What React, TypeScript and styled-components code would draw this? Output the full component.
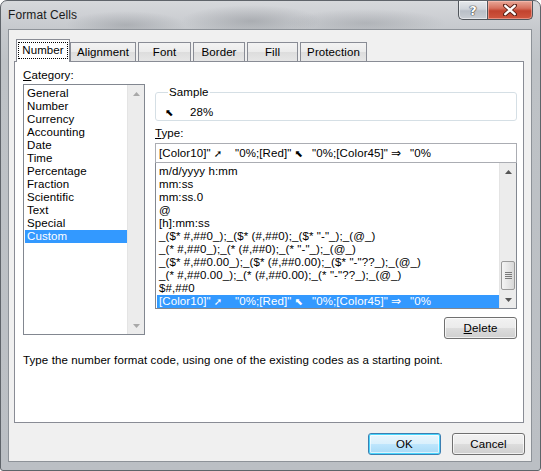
import React from "react";
import styled, { createGlobalStyle, css } from "styled-components";

const UI = `"Liberation Sans", "DejaVu Sans", sans-serif`;

const Global = createGlobalStyle`
  html, body { margin: 0; padding: 0; background: #ffffff; }
  body {
    width: 541px; height: 471px; overflow: hidden;
    font-family: ${UI};
    font-size: 11.5px; color: #000;
  }
  * { box-sizing: border-box; }
`;

const Window = styled.div`
  width: 541px;
  height: 471px;
  display: flex;
  flex-direction: column;
  border: 1px solid #5f646a;
  border-radius: 7px 7px 3px 3px;
  overflow: hidden;
  background:
    radial-gradient(ellipse 60px 14px at 125px 24px, rgba(120,124,130,0.35), transparent),
    radial-gradient(ellipse 70px 16px at 250px 20px, rgba(110,114,120,0.35), transparent),
    radial-gradient(ellipse 80px 14px at 365px 22px, rgba(120,124,130,0.3), transparent),
    linear-gradient(180deg, #d6d8db 0px, #c6c9cd 28px, #bec2c6 60px, #bbbfc4 100%);
`;

const TitleBar = styled.div`
  height: 28px;
  display: flex;
  align-items: flex-start;
  flex: none;
`;

const Title = styled.span`
  align-self: center;
  padding-left: 7px;
  font-family: ${UI};
  font-size: 12px;
  letter-spacing: 0.1px;
  color: #1a1a1a;
`;

const Caption = styled.div`
  margin-left: auto;
  margin-right: 7px;
  display: flex;
  height: 19px;
`;

const CapBtn = styled.div<{ $kind: "help" | "close" }>`
  height: 19px;
  display: flex;
  align-items: center;
  justify-content: center;
  border: 1px solid #50555b;
  border-top: none;
  ${(p) =>
    p.$kind === "help"
      ? css`
          width: 29px;
          border-right: none;
          border-radius: 0 0 0 5px;
          background: linear-gradient(180deg, #e6e9ec 0%, #cfd4da 45%, #b9bfc7 55%, #c9ced4 100%);
          box-shadow: inset 0 0 0 1px rgba(255,255,255,0.5);
        `
      : css`
          width: 46px;
          border-radius: 0 0 5px 0;
          background: linear-gradient(180deg, #e9a898 0%, #d6715e 40%, #c2432f 55%, #d0563f 100%);
          box-shadow: inset 0 0 0 1px rgba(255,200,190,0.5);
        `}
`;

const HelpGlyph = styled.span`
  font-family: "DejaVu Sans", sans-serif;
  font-weight: bold;
  font-size: 13px;
  color: #fff;
  text-shadow: 0 0 1px #333, 0 0 1px #333, 0 0 1px #333;
  line-height: 1;
`;

const Client = styled.div`
  flex: 1;
  margin: 0 8px 8px 7px;
  border: 1px solid #8d9298;
  background: #f0f0f0;
  display: flex;
  flex-direction: column;
`;

const TabStrip = styled.div`
  display: flex;
  align-items: flex-end;
  gap: 2px;
  height: 31px;
  padding: 9px 0 0 9px;
  position: relative;
  z-index: 1;
`;

const Tab = styled.div<{ $w: number; $active?: boolean }>`
  width: ${(p) => p.$w}px;
  height: 19px;
  display: flex;
  align-items: center;
  justify-content: center;
  font-family: ${UI};
  font-size: 11.5px;
  letter-spacing: 0.1px;
  border: 1px solid #898c95;
  border-bottom: none;
  background: linear-gradient(180deg, #f3f3f3 0%, #ebebeb 50%, #dddddd 51%, #e6e6e6 100%);
  ${(p) =>
    p.$active &&
    css`
      height: 23px;
      margin: 0 -2px -1px -2px;
      background: #ffffff;
      padding-bottom: 2px;
    `}
`;

const FocusText = styled.span`
  outline: 1px dotted #000;
  outline-offset: 0px;
  padding: 0 3px;
  line-height: 15px;
`;

const Panel = styled.div`
  margin: 0 7px 0 5px;
  height: 362px;
  border: 1px solid #898c95;
  background: #fff;
  padding: 6px 6px 0 8px;
  display: flex;
  flex-direction: column;
`;

const Body = styled.div`
  display: grid;
  grid-template-columns: 122px 362px;
  column-gap: 10px;
`;

const Column = styled.div<{ $top?: number }>`
  display: flex;
  flex-direction: column;
  margin-top: ${(p) => p.$top ?? 0}px;
`;

const Label = styled.div<{ $gap?: number }>`
  font-family: ${UI};
  font-size: 11.5px;
  letter-spacing: 0.1px;
  line-height: 14px;
  margin-top: ${(p) => p.$gap ?? 0}px;
  u { text-decoration: underline; text-underline-offset: 1px; }
`;

const ListBox = styled.div<{ $h: number; $attached?: boolean }>`
  margin-top: ${(p) => (p.$attached ? 0 : 2)}px;
  height: ${(p) => p.$h}px;
  border: 1px solid #828790;
  border-top-width: ${(p) => (p.$attached ? 0 : 1)}px;
  background: #fff;
  display: grid;
  grid-template-columns: 1fr 17px;
  overflow: hidden;
`;

const Items = styled.div<{ $pt: number }>`
  padding-top: ${(p) => p.$pt}px;
  overflow: hidden;
`;

const Item = styled.div<{ $sel?: boolean }>`
  height: 13px;
  line-height: 13px;
  font-family: ${UI};
  font-size: 11.5px;
  letter-spacing: 0.1px;
  padding-left: 2px;
  margin-left: 1px;
  white-space: pre;
  overflow: hidden;
  ${(p) =>
    p.$sel &&
    css`
      background: #3399ff;
      color: #fff;
    `}
`;

const ScrollBar = styled.div`
  display: flex;
  flex-direction: column;
  background: #ececec;
  border-left: 1px solid #e4e4e4;
`;

const Arrow = styled.div<{ $dark?: boolean }>`
  height: 17px;
  display: flex;
  align-items: center;
  justify-content: center;
  color: ${(p) => (p.$dark ? "#555" : "#a8a8a8")};
`;

const Track = styled.div`
  flex: 1;
  display: flex;
  flex-direction: column;
  justify-content: flex-end;
`;

const Thumb = styled.div`
  height: 29px;
  margin: 0 1px 1px 1px;
  border: 1px solid #9a9a9a;
  border-radius: 2px;
  background: linear-gradient(90deg, #f4f4f4 0%, #e6e6e6 50%, #d8d8d8 100%);
  display: flex;
  align-items: center;
  justify-content: center;
`;

const Grip = styled.div`
  width: 7px;
  height: 7px;
  background: repeating-linear-gradient(180deg, #7a7a7a 0 1px, transparent 1px 2px);
`;

const Group = styled.fieldset`
  margin: 0;
  padding: 0 8px 2px 9px;
  border: 1px solid #d5dfe5;
  border-radius: 3px;
  height: 36px;
  min-width: 0;
`;

const Legend = styled.legend`
  padding: 0 1px;
  margin-left: 3px;
  font-family: ${UI};
  font-size: 11.5px;
  letter-spacing: 0.1px;
  line-height: 14px;
`;

const SampleRow = styled.div`
  display: flex;
  align-items: center;
  gap: 14px;
  height: 16px;
  margin-top: 5px;
  font-family: ${UI};
  font-size: 11.5px;
  letter-spacing: 0.1px;
`;

const Glyph = styled.span<{ $size?: number }>`
  font-family: "DejaVu Sans", sans-serif;
  font-size: ${(p) => p.$size ?? 10}px;
  line-height: 11px;
  display: inline-block;
  width: 11px;
`;

const TypeInput = styled.div`
  margin-top: 3px;
  height: 20px;
  border: 1px solid #abadb3;
  display: flex;
  align-items: center;
  padding-left: 3px;
  background: #fff;
`;

const Code = styled.div`
  display: grid;
  grid-template-columns: 76px 77px 98px auto;
  font-family: ${UI};
  font-size: 11.5px;
  letter-spacing: 0.1px;
  line-height: 13px;
  white-space: pre;
`;

const CodeCell = styled.span`
  display: flex;
  align-items: center;
  gap: 3px;
`;

const ButtonRow = styled.div<{ $top: number; $right: number }>`
  display: flex;
  justify-content: flex-end;
  gap: 11px;
  margin-top: ${(p) => p.$top}px;
  padding-right: ${(p) => p.$right}px;
`;

const Button = styled.div<{ $default?: boolean }>`
  width: 73px;
  height: 22px;
  display: flex;
  align-items: center;
  justify-content: center;
  font-family: ${UI};
  font-size: 11.5px;
  letter-spacing: 0.1px;
  border: 1px solid #707070;
  border-radius: 3px;
  background: linear-gradient(180deg, #f2f2f2 0%, #ebebeb 50%, #dddddd 51%, #cfcfcf 100%);
  box-shadow: inset 0 0 0 1px rgba(255, 255, 255, 0.7);
  u { text-decoration: underline; text-underline-offset: 1px; }
  ${(p) =>
    p.$default &&
    css`
      border-color: #3c7fb1;
      box-shadow: inset 0 0 0 1px #48d5fd, inset 0 0 0 2px rgba(255,255,255,0.6);
      background: linear-gradient(180deg, #eaf6fd 0%, #d9f0fc 50%, #bee6fd 51%, #a7d9f5 100%);
    `}
`;

const Description = styled.div`
  margin-top: 14px;
  font-family: ${UI};
  font-size: 11.5px;
  letter-spacing: 0.1px;
  line-height: 14px;
`;

const UpArrow = () => (
  <svg width="7" height="4" viewBox="0 0 7 4">
    <path d="M0 4 L3.5 0 L7 4 Z" fill="currentColor" />
  </svg>
);
const DownArrow = () => (
  <svg width="7" height="4" viewBox="0 0 7 4">
    <path d="M0 0 L3.5 4 L7 0 Z" fill="currentColor" />
  </svg>
);

const CloseX = () => (
  <svg width="14" height="12" viewBox="0 0 14 12">
    <path d="M2 1.5 L12 10.5 M12 1.5 L2 10.5" stroke="#5a2218" strokeWidth="4.2" strokeLinecap="round" />
    <path d="M2.3 1.8 L11.7 10.2 M11.7 1.8 L2.3 10.2" stroke="#ffffff" strokeWidth="2.4" strokeLinecap="round" />
  </svg>
);

const categories = [
  "General", "Number", "Currency", "Accounting", "Date", "Time",
  "Percentage", "Fraction", "Scientific", "Text", "Special", "Custom",
];

const types = [
  "m/d/yyyy h:mm",
  "mm:ss",
  "mm:ss.0",
  "@",
  "[h]:mm:ss",
  '_($* #,##0_);_($* (#,##0);_($* "-"_);_(@_)',
  '_(* #,##0_);_(* (#,##0);_(* "-"_);_(@_)',
  '_($* #,##0.00_);_($* (#,##0.00);_($* "-"??_);_(@_)',
  '_(* #,##0.00_);_(* (#,##0.00);_(* "-"??_);_(@_)',
  "$#,##0",
];

const FormatCode = () => (
  <Code>
    <CodeCell>[Color10]"<Glyph>➚</Glyph></CodeCell>
    <CodeCell>"0%;[Red]"<Glyph>⬉</Glyph></CodeCell>
    <CodeCell>"0%;[Color45]"<Glyph $size={12}>⇒</Glyph></CodeCell>
    <CodeCell>"0%</CodeCell>
  </Code>
);

export default function App() {
  return (
    <>
      <Global />
      <Window>
        <TitleBar>
          <Title>Format Cells</Title>
          <Caption>
            <CapBtn $kind="help"><HelpGlyph>?</HelpGlyph></CapBtn>
            <CapBtn $kind="close"><CloseX /></CapBtn>
          </Caption>
        </TitleBar>
        <Client>
          <TabStrip>
            <Tab $w={54} $active><FocusText>Number</FocusText></Tab>
            <Tab $w={66}>Alignment</Tab>
            <Tab $w={53}>Font</Tab>
            <Tab $w={52}>Border</Tab>
            <Tab $w={51}>Fill</Tab>
            <Tab $w={67}>Protection</Tab>
          </TabStrip>
          <Panel>
            <Body>
              <Column>
                <Label><u>C</u>ategory:</Label>
                <ListBox $h={251}>
                  <Items $pt={2}>
                    {categories.map((c) => (
                      <Item key={c} $sel={c === "Custom"}>{c}</Item>
                    ))}
                  </Items>
                  <ScrollBar>
                    <Arrow><UpArrow /></Arrow>
                    <Track />
                    <Arrow><DownArrow /></Arrow>
                  </ScrollBar>
                </ListBox>
              </Column>
              <Column $top={17}>
                <Group>
                  <Legend>Sample</Legend>
                  <SampleRow>
                    <Glyph>⬉</Glyph>
                    <span>28%</span>
                  </SampleRow>
                </Group>
                <Label $gap={5}><u>T</u>ype:</Label>
                <TypeInput><FormatCode /></TypeInput>
                <ListBox $h={146} $attached>
                  <Items $pt={2}>
                    {types.map((t) => (
                      <Item key={t}>{t}</Item>
                    ))}
                    <Item $sel><FormatCode /></Item>
                  </Items>
                  <ScrollBar>
                    <Arrow $dark><UpArrow /></Arrow>
                    <Track>
                      <Thumb><Grip /></Thumb>
                    </Track>
                    <Arrow $dark><DownArrow /></Arrow>
                  </ScrollBar>
                </ListBox>
                <ButtonRow $top={8} $right={0}>
                  <Button><span><u>D</u>elete</span></Button>
                </ButtonRow>
              </Column>
            </Body>
            <Description>
              Type the number format code, using one of the existing codes as a starting point.
            </Description>
          </Panel>
          <ButtonRow $top={10} $right={6}>
            <Button $default>OK</Button>
            <Button>Cancel</Button>
          </ButtonRow>
        </Client>
      </Window>
    </>
  );
}
